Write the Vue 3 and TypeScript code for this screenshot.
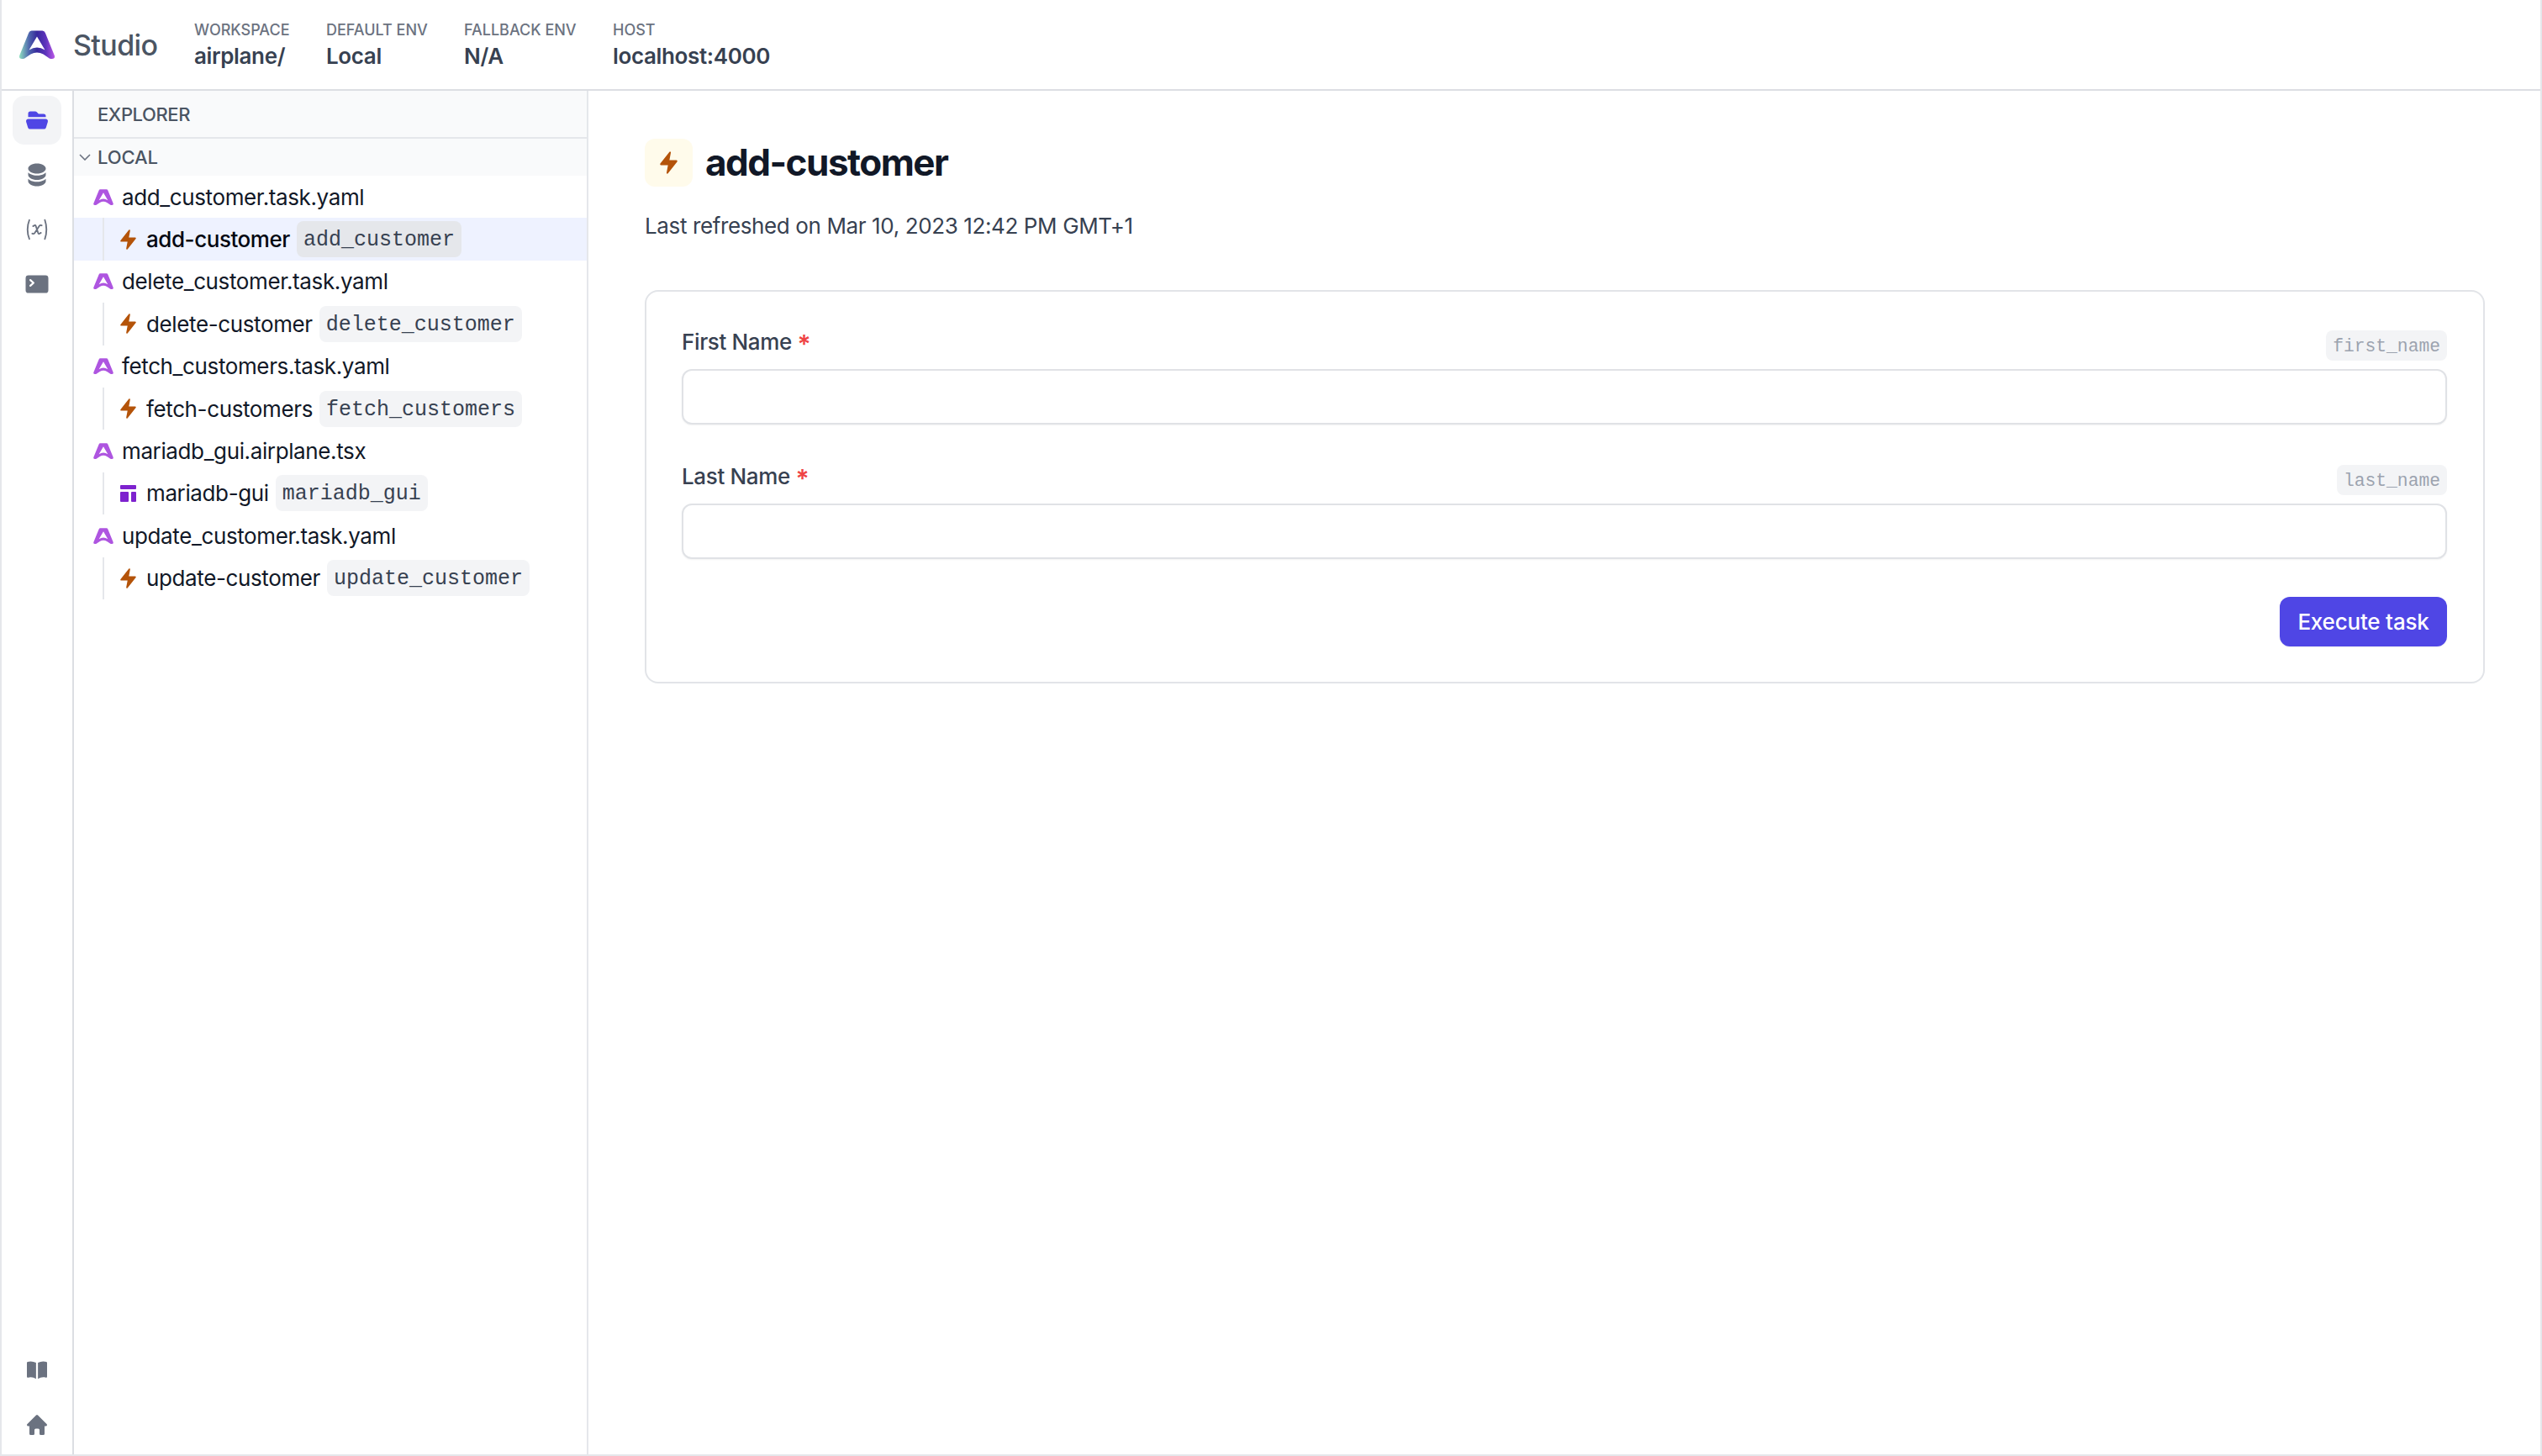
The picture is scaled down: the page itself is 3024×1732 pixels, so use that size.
<script setup lang="ts">
interface Row { file: string; name: string; slug: string; kind: 'task' | 'view'; active?: boolean }
const rows: Row[] = [
  { file: 'add_customer.task.yaml', name: 'add-customer', slug: 'add_customer', kind: 'task', active: true },
  { file: 'delete_customer.task.yaml', name: 'delete-customer', slug: 'delete_customer', kind: 'task' },
  { file: 'fetch_customers.task.yaml', name: 'fetch-customers', slug: 'fetch_customers', kind: 'task' },
  { file: 'mariadb_gui.airplane.tsx', name: 'mariadb-gui', slug: 'mariadb_gui', kind: 'view' },
  { file: 'update_customer.task.yaml', name: 'update-customer', slug: 'update_customer', kind: 'task' },
]
const meta = [
  { label: 'WORKSPACE', value: 'airplane/', width: '157px' },
  { label: 'DEFAULT ENV', value: 'Local', width: '164px' },
  { label: 'FALLBACK ENV', value: 'N/A', width: '177px' },
  { label: 'HOST', value: 'localhost:4000', width: 'auto' },
]
const fields = [
  { label: 'First Name', slug: 'first_name' },
  { label: 'Last Name', slug: 'last_name' },
]
const logo = 'M14.5 .5H27.5Q29.8 .5 30.8 3L41.8 30Q43 34 39 34H37.5Q35.6 34 34 32.3L28.5 28.5Q21 24.5 13.5 28.5L8 32.3Q6.4 34 4.5 34H3Q-1 34 .2 30L11.2 3Q12.2 .5 14.5 .5ZM21 7.5L11.5 23.5Q21 17.5 30.5 23.5Z'
const bolt = 'M11.983 1.907a.75.75 0 00-1.292-.657l-8.5 9.5A.75.75 0 002.75 12h6.572l-1.305 6.093a.75.75 0 001.292.657l8.5-9.5A.75.75 0 0017.25 8h-6.572l1.305-6.093z'
</script>

<template>
  <div class="page">
    <header class="topbar">
      <svg class="logo" viewBox="0 0 42 34" width="42" height="34">
        <defs>
          <linearGradient id="lg" x1="0" y1="0" x2="1" y2="0">
            <stop offset="0" stop-color="#8fe0c0" />
            <stop offset="0.28" stop-color="#4f66ae" />
            <stop offset="0.5" stop-color="#36299c" />
            <stop offset="0.75" stop-color="#5f34bd" />
            <stop offset="1" stop-color="#bb58e6" />
          </linearGradient>
        </defs>
        <path :d="logo" fill="url(#lg)" fill-rule="evenodd" />
      </svg>
      <span class="studio">Studio</span>
      <div class="meta">
        <div v-for="m in meta" :key="m.label" class="meta-item" :style="{ width: m.width }">
          <div class="meta-label">{{ m.label }}</div>
          <div class="meta-value">{{ m.value }}</div>
        </div>
      </div>
    </header>

    <div class="body">
      <nav class="rail">
        <div class="rail-btn on">
          <svg viewBox="0 0 20 20" width="30" height="30" fill="#4f46e5"><path d="M4.75 3A1.75 1.75 0 003 4.75v2.752l.104-.002h13.792c.035 0 .07 0 .104.002V6.75A1.75 1.75 0 0015.25 5h-3.836a.25.25 0 01-.177-.073L9.823 3.513A1.75 1.75 0 008.586 3H4.75zM3.104 9a1.75 1.75 0 00-1.673 2.265l1.385 4.5A1.75 1.75 0 004.488 17h11.023a1.75 1.75 0 001.673-1.235l1.384-4.5A1.75 1.75 0 0016.896 9H3.104z" /></svg>
        </div>
        <div class="rail-btn">
          <svg viewBox="0 0 20 20" width="30" height="30" fill="#6b7280"><path d="M10 1c3.866 0 7 1.79 7 4s-3.134 4-7 4-7-1.79-7-4 3.134-4 7-4zm5.694 8.13c.464-.264.91-.583 1.306-.952V10c0 2.21-3.134 4-7 4s-7-1.79-7-4V8.178c.396.37.842.688 1.306.953C5.838 10.006 7.854 10.5 10 10.5s4.162-.494 5.694-1.37zM3 13.179V15c0 2.21 3.134 4 7 4s7-1.79 7-4v-1.822c-.396.37-.842.688-1.306.953-1.532.875-3.548 1.369-5.694 1.369s-4.162-.494-5.694-1.37A7.009 7.009 0 013 13.179z" /></svg>
        </div>
        <div class="rail-btn">
          <svg viewBox="0 0 24 24" width="30" height="30" fill="none" stroke="#6b7280" stroke-width="1.5" stroke-linecap="round" stroke-linejoin="round"><path d="M4.745 3A23.933 23.933 0 003 12c0 3.183.62 6.22 1.745 9M19.5 3c.967 2.78 1.5 5.817 1.5 9s-.533 6.22-1.5 9M8.25 8.885l1.444-.89a.75.75 0 011.105.402l2.402 7.206a.75.75 0 001.104.401l1.445-.889m-8.25.75l.213.09a1.687 1.687 0 002.062-.617l4.45-6.676a1.688 1.688 0 012.062-.618l.213.09" /></svg>
        </div>
        <div class="rail-btn">
          <svg viewBox="0 0 20 20" width="30" height="30" fill="#6b7280"><path d="M3.25 3A2.25 2.25 0 001 5.25v9.5A2.25 2.25 0 003.25 17h13.5A2.25 2.25 0 0019 14.75v-9.5A2.25 2.25 0 0016.75 3H3.25zm.943 8.752a.75.75 0 01.055-1.06L6.128 9l-1.88-1.693a.75.75 0 111.004-1.114l2.5 2.25a.75.75 0 010 1.114l-2.5 2.25a.75.75 0 01-1.06-.055zM9.75 10.25a.75.75 0 000 1.5h2.5a.75.75 0 000-1.5h-2.5z" /></svg>
        </div>
        <div class="rail-spacer"></div>
        <div class="rail-btn">
          <svg viewBox="0 0 20 20" width="30" height="30" fill="#6b7280"><path d="M10.75 16.82A7.462 7.462 0 0115 15.5c.71 0 1.396.098 2.046.282A.75.75 0 0018 15.06v-11a.75.75 0 00-.546-.721A9.006 9.006 0 0015 3a8.963 8.963 0 00-4.25 1.065V16.82zM9.25 4.065A8.963 8.963 0 005 3c-.85 0-1.673.118-2.454.339A.75.75 0 002 4.06v11a.75.75 0 00.954.721A7.506 7.506 0 015 15.5c1.579 0 3.042.487 4.25 1.32V4.065z" /></svg>
        </div>
        <div class="rail-btn">
          <svg viewBox="0 0 20 20" width="30" height="30" fill="#6b7280"><path d="M9.293 2.293a1 1 0 011.414 0l7 7A1 1 0 0117 11h-1v6a1 1 0 01-1 1h-2a1 1 0 01-1-1v-3a1 1 0 00-1-1H9a1 1 0 00-1 1v3a1 1 0 01-1 1H5a1 1 0 01-1-1v-6H3a1 1 0 01-.707-1.707l7-7z" /></svg>
        </div>
      </nav>

      <aside class="explorer">
        <div class="ex-head">EXPLORER</div>
        <div class="ex-local">
          <svg class="chev" viewBox="0 0 14 8" width="14" height="8" fill="none" stroke="#6b7280" stroke-width="1.6"><path d="M1 1l6 6 6-6" /></svg>
          <span>LOCAL</span>
        </div>
        <template v-for="r in rows" :key="r.file">
          <div class="row file">
            <svg viewBox="-0.5 0 43 34" width="24" height="19" fill="#ae55e0"><path :d="logo" fill-rule="evenodd" /></svg>
            <span>{{ r.file }}</span>
          </div>
          <div class="row child" :class="{ active: r.active }">
            <span class="guide"></span>
            <svg v-if="r.kind === 'task'" class="bolt" viewBox="1.8 0.8 16.4 18.4" width="19" height="24" preserveAspectRatio="none" fill="#b45309"><path :d="bolt" /></svg>
            <span v-else class="layout"><i class="l-top"></i><i class="l-left"></i><i class="l-right"></i></span>
            <span class="child-name">{{ r.name }}</span>
            <code class="slug">{{ r.slug }}</code>
          </div>
        </template>
      </aside>

      <main class="main">
        <div class="title-row">
          <span class="title-icon">
            <svg viewBox="1.8 0.8 16.4 18.4" width="21" height="27" preserveAspectRatio="none" fill="#b45309"><path :d="bolt" /></svg>
          </span>
          <h1>add-customer</h1>
        </div>
        <p class="refreshed">Last refreshed on Mar 10, 2023 12:42 PM GMT+1</p>

        <form class="card" @submit.prevent>
          <div v-for="f in fields" :key="f.slug" class="field">
            <div class="field-head">
              <label class="field-label">{{ f.label }} <span class="req">*</span></label>
              <code class="field-slug">{{ f.slug }}</code>
            </div>
            <input class="input" type="text" />
          </div>
          <div class="actions">
            <button class="exec" type="button">Execute task</button>
          </div>
        </form>
      </main>
    </div>
  </div>
</template>

<style>
html, body { margin: 0; padding: 0; background: #fff; }
</style>

<style scoped>
.page {
  width: 3024px;
  height: 1732px;
  box-sizing: border-box;
  display: flex;
  flex-direction: column;
  border-left: 2px solid #e5e7eb;
  border-right: 2px solid #e5e7eb;
  border-bottom: 2px solid #e5e7eb;
  font-family: Inter, "Liberation Sans", sans-serif;
  color: #111827;
  background: #fff;
}
.topbar {
  height: 108px;
  box-sizing: border-box;
  flex: none;
  display: flex;
  align-items: center;
  border-bottom: 2px solid #dcdee3;
  padding-left: 21px;
}
.logo { flex: none; margin-top: -1px; }
.studio {
  margin-left: 22px;
  width: 144px;
  font-size: 34px;
  letter-spacing: -0.6px;
  font-weight: 500;
  color: #4b5563;
}
.meta { display: flex; }
.meta-label {
  font-size: 18px;
  line-height: 26px;
  padding-top: 1px;
  font-weight: 500;
  color: #6b7280;
}
.meta-value {
  font-size: 26px;
  letter-spacing: -0.36px;
  line-height: 35px;
  font-weight: 600;
  color: #374151;
}
.body { flex: 1; display: flex; min-height: 0; }
.rail {
  width: 86px;
  box-sizing: border-box;
  flex: none;
  border-right: 2px solid #dcdee3;
  padding: 6px 0 6px;
  display: flex;
  flex-direction: column;
  align-items: center;
  gap: 7px;
}
.rail-spacer { flex: 1; }
.rail-btn {
  width: 58px;
  height: 58px;
  border-radius: 14px;
  display: flex;
  align-items: center;
  justify-content: center;
}
.rail-btn.on { background: #f3f4f6; }
.explorer {
  width: 612px;
  box-sizing: border-box;
  flex: none;
  border-right: 2px solid #e5e7eb;
}
.ex-head {
  height: 57px;
  box-sizing: border-box;
  background: #f9fafb;
  border-bottom: 2px solid #e5e7eb;
  padding-left: 28px;
  display: flex;
  align-items: center;
  font-size: 22px;
  letter-spacing: -0.4px;
  font-weight: 500;
  color: #4b5563;
}
.ex-local {
  height: 44px;
  background: #f9fafb;
  display: flex;
  align-items: center;
  padding-left: 6px;
  font-size: 22px;
  letter-spacing: -0.1px;
  font-weight: 500;
  color: #4b5563;
}
.chev { margin-right: 8px; }
.row {
  height: 50.4px;
  display: flex;
  align-items: center;
  font-size: 26px;
  letter-spacing: -0.38px;
  color: #111827;
  white-space: nowrap;
}
.file { padding-left: 23px; gap: 10px; }
.file svg { flex: none; }
.child { position: relative; padding-left: 55px; }
.child.active { background: #eef2ff; }
.guide {
  position: absolute;
  left: 34px;
  top: 0;
  bottom: 0;
  width: 2px;
  background: #e5e7eb;
}
.bolt { flex: none; }
.layout {
  flex: none;
  width: 19px;
  height: 20px;
  display: grid;
  grid-template-columns: 10px 6px;
  grid-template-rows: 5px 12px;
  gap: 3px;
}
.layout i { background: #7e22ce; display: block; border-radius: 1px; }
.l-top { grid-column: 1 / 3; width: 19px; }
.child-name { margin-left: 12px; }
.child.active .child-name { font-weight: 500; color: #030712; letter-spacing: -0.45px; }
.slug {
  margin-left: 8px;
  height: 43px;
  box-sizing: border-box;
  padding: 2px 8px 0;
  display: flex;
  align-items: center;
  border-radius: 8px;
  background: #f3f4f6;
  font-family: "Liberation Mono", "DejaVu Sans Mono", monospace;
  font-size: 25px;
  letter-spacing: 0;
  color: #374151;
}
.child.active .slug { background: #e5e7eb; }
.main {
  flex: 1;
  min-width: 0;
  padding: 57px 66px 0 67px;
}
.title-row { display: flex; align-items: center; gap: 15px; }
.title-icon {
  width: 57px;
  height: 57px;
  border-radius: 12px;
  background: #fffbeb;
  display: flex;
  align-items: center;
  justify-content: center;
}
h1 {
  margin: 0;
  font-size: 44px;
  line-height: 57px;
  font-weight: 700;
  color: #111827;
  letter-spacing: -1.5px;
}
.refreshed {
  margin: 29px 0 0;
  font-size: 26px;
  letter-spacing: -0.38px;
  line-height: 36px;
  color: #374151;
}
.card {
  margin-top: 58px;
  box-sizing: border-box;
  height: 468px;
  border: 2px solid #e2e4e8;
  border-radius: 16px;
  padding: 46px 43px 0 42px;
}
.field { margin-bottom: 48px; }
.field-head {
  display: flex;
  align-items: flex-start;
  justify-content: space-between;
  height: 36px;
  margin-bottom: 10px;
}
.field-label {
  font-size: 26px;
  letter-spacing: -0.36px;
  line-height: 28px;
  font-weight: 500;
  color: #374151;
}
.req {
  display: inline-block;
  color: #ef4444;
  font-size: 30px;
  font-weight: 600;
  line-height: 20px;
  transform: translateY(4px);
}
.field-slug {
  height: 36px;
  box-sizing: border-box;
  padding: 2px 8px 0;
  display: flex;
  align-items: center;
  border-radius: 8px;
  background: #f3f4f6;
  font-family: "Liberation Mono", "DejaVu Sans Mono", monospace;
  font-size: 21.3px;
  color: #9ca3af;
}
.input {
  display: block;
  width: 100%;
  height: 66px;
  box-sizing: border-box;
  border: 2px solid #e0e2e6;
  border-radius: 12px;
  background: #fff;
  box-shadow: 0 1px 2px rgba(0, 0, 0, 0.05);
  outline: none;
}
.actions { display: flex; justify-content: flex-end; margin-top: -3px; }
.exec {
  width: 199px;
  height: 59px;
  border: none;
  border-radius: 12px;
  background: #4f46e5;
  color: #fff;
  font-family: inherit;
  font-size: 26px;
  letter-spacing: -0.2px;
  font-weight: 500;
  padding-bottom: 2px;
  box-shadow: 0 1px 2px rgba(0, 0, 0, 0.05);
}
</style>
